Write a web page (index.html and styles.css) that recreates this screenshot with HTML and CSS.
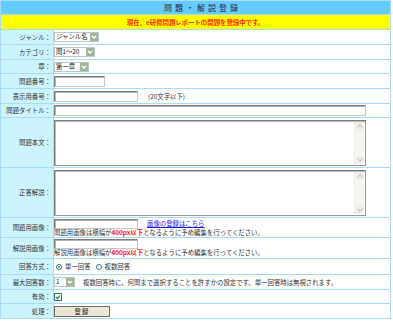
FILE: index.html
```html
<!DOCTYPE html>
<html lang="ja">
<head>
<meta charset="utf-8">
<title>問題・解説登録</title>
<link rel="stylesheet" href="styles.css">
</head>
<body>
<div class="form">
  <div class="title">問題・解説登録</div>
  <div class="notice">現在、e研修問題レポートの問題を登録中です。</div>

  <div class="lbl">ジャンル：</div>
  <div class="val"><span class="sel w43"><span class="opt">ジャンル名</span><span class="arr"><svg width="8" height="8" viewBox="0 0 8 8"><path d="M2 3 L4 5 L6 3" fill="none" stroke="#fff" stroke-width="1.3"/></svg></span></span></div>

  <div class="lbl">カテゴリ：</div>
  <div class="val"><span class="sel w40"><span class="opt">問1～20</span><span class="arr"><svg width="8" height="8" viewBox="0 0 8 8"><path d="M2 3 L4 5 L6 3" fill="none" stroke="#fff" stroke-width="1.3"/></svg></span></span></div>

  <div class="lbl">章：</div>
  <div class="val"><span class="sel w34"><span class="opt">第一章</span><span class="arr"><svg width="8" height="8" viewBox="0 0 8 8"><path d="M2 3 L4 5 L6 3" fill="none" stroke="#fff" stroke-width="1.3"/></svg></span></span></div>

  <div class="lbl">問題番号：</div>
  <div class="val"><span class="box w50"></span></div>

  <div class="lbl">表示用番号：</div>
  <div class="val"><span class="box w83"></span><span class="hint">(20文字以下)</span></div>

  <div class="lbl">問題タイトル：</div>
  <div class="val"><span class="box w311"></span></div>

  <div class="lbl">問題本文：</div>
  <div class="val"><div class="area"><div class="sb"><span class="up"></span><span class="dn"></span></div></div></div>

  <div class="lbl">正答解説：</div>
  <div class="val"><div class="area"><div class="sb"><span class="up"></span><span class="dn"></span></div></div></div>

  <div class="lbl">問題用画像：</div>
  <div class="val stack">
    <div class="line"><span class="box w83 file"></span><a class="link" href="#">画像の登録はこちら</a></div>
    <div class="note">問題用画像は横幅が<b class="red">400px以下</b>となるように予め編集を行ってください。</div>
  </div>

  <div class="lbl">解説用画像：</div>
  <div class="val stack">
    <div class="line"><span class="box w83 file"></span></div>
    <div class="note">解説用画像は横幅が<b class="red">400px以下</b>となるように予め編集を行ってください。</div>
  </div>

  <div class="lbl">回答方式：</div>
  <div class="val"><span class="radio on"></span><span class="rtext">単一回答</span><span class="radio"></span><span class="rtext">複数回答</span></div>

  <div class="lbl">最大回答数：</div>
  <div class="val"><span class="sel w21"><span class="opt">1</span><span class="arr"><svg width="8" height="8" viewBox="0 0 8 8"><path d="M2 3 L4 5 L6 3" fill="none" stroke="#fff" stroke-width="1.3"/></svg></span></span><span class="desc">複数回答時に、何問まで選択することを許すかの設定です。単一回答時は無視されます。</span></div>

  <div class="lbl">有効：</div>
  <div class="val"><span class="check"><svg width="6" height="6" viewBox="0 0 6 6"><path d="M1 3 L2.5 4.5 L5 1.5" fill="none" stroke="#21a121" stroke-width="1.3"/></svg></span></div>

  <div class="lbl">処理：</div>
  <div class="val"><span class="btn">登録</span></div>
</div>
</body>
</html>
```
FILE: styles.css
```css
html, body {
  margin: 0;
  padding: 0;
  background: #ffffff;
}
body {
  font-family: "Noto Sans CJK JP", "Noto Sans", sans-serif;
  font-size: 6.4px;
  color: #333333;
}
.form {
  width: 391px;
  box-sizing: border-box;
  display: grid;
  grid-template-columns: 52px 336px;
  grid-template-rows: 13px 14px 14px 14px 13px 14px 14px 13px 49px 49px 19px 20px 15px 14px 13px 14px;
  gap: 1px;
  padding: 1px;
  background: #a9ddf7;
}
.title {
  grid-column: 1 / 3;
  background: #66ccff;
  display: flex;
  align-items: center;
  justify-content: center;
  padding-left: 14px;
  font-size: 8px;
  letter-spacing: 3px;
  color: #2a2a3a;
}
.notice {
  grid-column: 1 / 3;
  background: #ffff00;
  display: flex;
  align-items: center;
  justify-content: center;
  color: #ff2a00;
  font-weight: bold;
}
.lbl {
  background: #ccf4ff;
  display: flex;
  align-items: center;
  justify-content: flex-end;
  padding-right: 2px;
  white-space: nowrap;
}
.val {
  background: #ffffff;
  display: flex;
  align-items: center;
  white-space: nowrap;
}
.val.stack {
  flex-direction: column;
  align-items: flex-start;
  justify-content: center;
}
.line {
  display: flex;
  align-items: center;
  height: 10px;
}
.note {
  line-height: 8px;
  height: 8px;
}
.red {
  color: #ff2020;
}
.sel {
  height: 10px;
  box-sizing: border-box;
  border: 1px solid #b9c4cc;
  background: #fff;
  display: flex;
  align-items: center;
  justify-content: space-between;
  padding-left: 1px;
  gap: 1px;
}
.w43 { width: 45px; }
.w40 { width: 41px; }
.w34 { width: 35px; }
.w21 { width: 21px; }
.opt {
  line-height: 8px;
  color: #222;
}
.arr {
  width: 8px;
  height: 8px;
  flex: none;
  background: #a3b596;
  display: flex;
  align-items: center;
  justify-content: center;
}
.box {
  display: block;
  height: 11px;
  box-sizing: border-box;
  border: 1px solid #7d7d7d;
  border-right-color: #c8c8c8;
  border-bottom-color: #c8c8c8;
  box-shadow: inset 1px 1px 0 #b0b0b0;
  background: #fff;
}
.w50 { width: 51px; }
.w83 { width: 84px; }
.w311 { width: 312px; }
.file { height: 10px; }
.hint {
  margin-left: 10px;
}
.link {
  margin-left: 9px;
  color: #1a1aee;
  text-decoration: underline;
}
.area {
  width: 312px;
  height: 46px;
  box-sizing: border-box;
  border: 1px solid #7d7d7d;
  box-shadow: inset 1px 1px 0 #b8b8b8;
  border-right-color: #9a9a9a;
  border-bottom-color: #9a9a9a;
  background: #fff;
  display: flex;
  justify-content: flex-end;
  padding: 1px;
}
.sb {
  width: 9px;
  background: #f6f6f1;
  border-left: 1px solid #ececec;
  display: flex;
  flex-direction: column;
  justify-content: space-between;
  align-items: center;
}
.up, .dn {
  width: 8px;
  height: 8px;
  background: #efefe8;
  position: relative;
}
.up::after, .dn::after {
  content: "";
  position: absolute;
  left: 2px;
  width: 3px;
  height: 3px;
  border-left: 1px solid #c2c2c2;
  border-top: 1px solid #c2c2c2;
}
.up::after {
  top: 3px;
  transform: rotate(45deg);
}
.dn::after {
  top: 1px;
  transform: rotate(225deg);
}
.radio {
  width: 6px;
  height: 6px;
  box-sizing: border-box;
  border: 1px solid #3b6ea0;
  border-radius: 50%;
  background: #fff;
  margin-left: 2px;
  display: flex;
  align-items: center;
  justify-content: center;
}
.radio.on::after {
  content: "";
  width: 2px;
  height: 2px;
  border-radius: 50%;
  background: #2aa52a;
}
.rtext {
  margin-left: 3px;
  margin-right: 3px;
}
.desc {
  margin-left: 8px;
}
.check {
  width: 8px;
  height: 8px;
  box-sizing: border-box;
  border: 1px solid #3b6ea0;
  background: #fff;
  display: flex;
  align-items: center;
  justify-content: center;
}
.btn {
  width: 56px;
  height: 11px;
  box-sizing: border-box;
  border: 1px solid #6e6e6e;
  background: #ebe6d4;
  display: flex;
  align-items: center;
  justify-content: center;
  letter-spacing: 1px;
  color: #222;
}
```
